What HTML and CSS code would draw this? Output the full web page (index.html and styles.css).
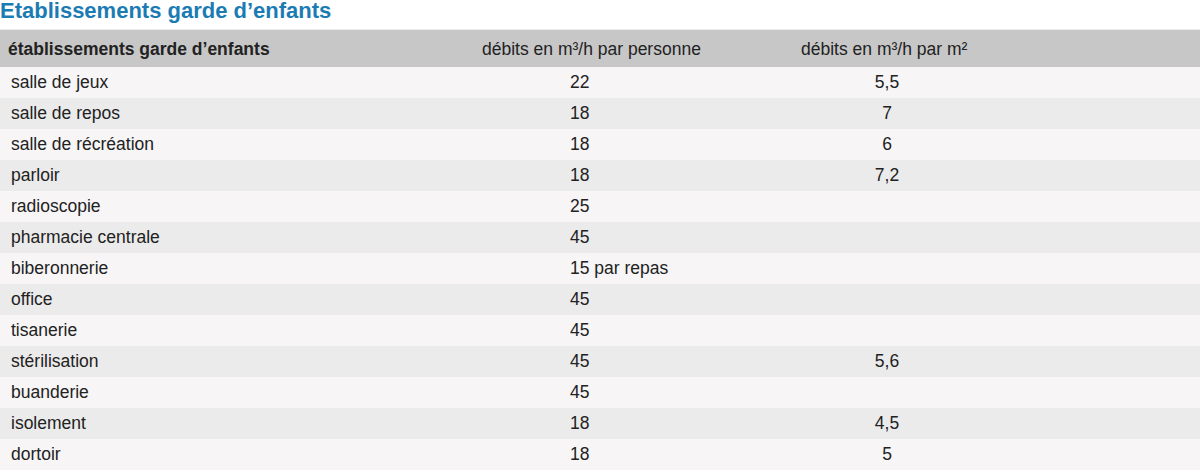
FILE: index.html
```html
<!DOCTYPE html>
<html lang="fr">
<head>
<meta charset="utf-8">
<title>Etablissements garde d’enfants</title>
<link rel="stylesheet" href="styles.css">
</head>
<body>
<h1 class="title">Etablissements garde d’enfants</h1>
<div class="table">
  <div class="row head">
    <div class="c1">établissements garde d’enfants</div>
    <div class="c2">débits en m³/h par personne</div>
    <div class="c3">débits en m³/h par m²</div>
    <div class="c4"></div>
  </div>
  <div class="row"><div class="c1">salle de jeux</div><div class="c2">22</div><div class="c3">5,5</div><div class="c4"></div></div>
  <div class="row"><div class="c1">salle de repos</div><div class="c2">18</div><div class="c3">7</div><div class="c4"></div></div>
  <div class="row"><div class="c1">salle de récréation</div><div class="c2">18</div><div class="c3">6</div><div class="c4"></div></div>
  <div class="row"><div class="c1">parloir</div><div class="c2">18</div><div class="c3">7,2</div><div class="c4"></div></div>
  <div class="row"><div class="c1">radioscopie</div><div class="c2">25</div><div class="c3"></div><div class="c4"></div></div>
  <div class="row"><div class="c1">pharmacie centrale</div><div class="c2">45</div><div class="c3"></div><div class="c4"></div></div>
  <div class="row"><div class="c1">biberonnerie</div><div class="c2">15 par repas</div><div class="c3"></div><div class="c4"></div></div>
  <div class="row"><div class="c1">office</div><div class="c2">45</div><div class="c3"></div><div class="c4"></div></div>
  <div class="row"><div class="c1">tisanerie</div><div class="c2">45</div><div class="c3"></div><div class="c4"></div></div>
  <div class="row"><div class="c1">stérilisation</div><div class="c2">45</div><div class="c3">5,6</div><div class="c4"></div></div>
  <div class="row"><div class="c1">buanderie</div><div class="c2">45</div><div class="c3"></div><div class="c4"></div></div>
  <div class="row"><div class="c1">isolement</div><div class="c2">18</div><div class="c3">4,5</div><div class="c4"></div></div>
  <div class="row"><div class="c1">dortoir</div><div class="c2">18</div><div class="c3">5</div><div class="c4"></div></div>
</div>
</body>
</html>
```
FILE: styles.css
```css
html, body {
  margin: 0;
  padding: 0;
  background: #ffffff;
}
body {
  font-family: "Liberation Sans", Arial, sans-serif;
  color: #222222;
  width: 1200px;
}
.title {
  margin: 0 0 7px 0;
  font-size: 22px;
  line-height: 22px;
  font-weight: bold;
  color: #1b7bb3;
}
.table {
  display: flex;
  flex-direction: column;
  border-top: 1px solid #ececec;
}
.row {
  display: grid;
  grid-template-columns: 482px 319px 170px 1fr;
  height: 31px;
  line-height: 31px;
  font-size: 17.5px;
  background: #f7f5f6;
}
.row:nth-child(odd) {
  background: #ebebeb;
}
.row.head {
  height: 37px;
  line-height: 38px;
  background: #c7c7c7;
}
.row .c1 {
  padding-left: 11px;
}
.row .c2 {
  padding-left: 88px;
}
.row .c3 {
  text-align: center;
  padding-left: 2px;
}
.row.head .c1 {
  padding-left: 8px;
  font-weight: bold;
}
.row.head .c2 {
  padding-left: 0;
}
.row.head .c3 {
  text-align: left;
  padding-left: 0;
  white-space: nowrap;
}
```
